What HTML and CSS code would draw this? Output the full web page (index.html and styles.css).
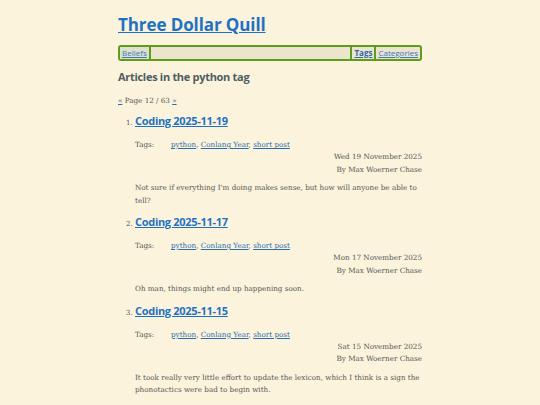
FILE: index.html
```html
<!DOCTYPE html>
<html lang="en">
<head>
<meta charset="utf-8">
<title>Three Dollar Quill</title>
<link rel="stylesheet" href="styles.css">
</head>
<body>
<div class="page">
  <header class="site-header">
    <h1 class="site-title"><a href="#">Three Dollar Quill</a></h1>
    <nav class="nav">
      <a class="nav-item first" href="#">Beliefs</a>
      <span class="nav-fill"></span>
      <a class="nav-item current" href="#">Tags</a>
      <a class="nav-item" href="#">Categories</a>
    </nav>
  </header>
  <main>
    <h2 class="section-title">Articles in the python tag</h2>
    <p class="pager"><a href="#">«</a> Page 12 / 63 <a href="#">»</a></p>
    <ol class="articles" start="1">
      <li class="article">
        <h3 class="article-title"><a href="#">Coding 2025-11-19</a></h3>
        <div class="tags"><span class="tags-label">Tags:</span><span><a href="#">python</a>, <a href="#">Conlang Year</a>, <a href="#">short post</a></span></div>
        <div class="meta">Wed 19 November 2025</div>
        <div class="meta">By Max Woerner Chase</div>
        <p class="summary">Not sure if everything I'm doing makes sense, but how will anyone be able to tell?</p>
      </li>
      <li class="article">
        <h3 class="article-title"><a href="#">Coding 2025-11-17</a></h3>
        <div class="tags"><span class="tags-label">Tags:</span><span><a href="#">python</a>, <a href="#">Conlang Year</a>, <a href="#">short post</a></span></div>
        <div class="meta">Mon 17 November 2025</div>
        <div class="meta">By Max Woerner Chase</div>
        <p class="summary">Oh man, things might end up happening soon.</p>
      </li>
      <li class="article">
        <h3 class="article-title"><a href="#">Coding 2025-11-15</a></h3>
        <div class="tags"><span class="tags-label">Tags:</span><span><a href="#">python</a>, <a href="#">Conlang Year</a>, <a href="#">short post</a></span></div>
        <div class="meta">Sat 15 November 2025</div>
        <div class="meta">By Max Woerner Chase</div>
        <p class="summary">It took really very little effort to update the lexicon, which I think is a sign the phonotactics were bad to begin with.</p>
      </li>
    </ol>
  </main>
</div>
</body>
</html>
```
FILE: styles.css
```css
html, body {
  margin: 0;
  padding: 0;
  background: #fcf3dc;
}
body {
  font-family: "DejaVu Serif", serif;
  font-size: 7.2px;
  color: #555;
}
.page {
  width: 304px;
  margin: 0 auto;
  padding-top: 14px;
}
a { color: #2a6cb0; }
.site-title {
  margin: 0;
  font-family: "Open Sans", sans-serif;
  font-size: 17px;
  font-weight: 700;
  line-height: 22px;
  letter-spacing: -0.1px;
}
.site-title a { color: #1e72c4; }
.nav {
  margin-top: 9px;
  display: flex;
  align-items: stretch;
  height: 12px;
  border: 2px solid #5e9c1c;
  border-radius: 3px;
  background: #ebe4cf;
  font-family: "Open Sans", sans-serif;
  font-size: 8px;
  line-height: 12px;
}
.nav-item {
  padding: 0 2px;
  color: #3a78b8;
}
.nav-item.first {
  background: #dde0cc;
  border-right: 2px solid #5e9c1c;
}
.nav-fill { flex: 1; border-right: 2px solid #5e9c1c; }
.nav-item.current {
  font-weight: 700;
  color: #2e6aa8;
  border-right: 2px solid #5e9c1c;
}
.section-title {
  margin: 8px 0 0;
  font-family: "Open Sans", sans-serif;
  font-size: 11px;
  font-weight: 700;
  color: #4f5d62;
  line-height: 16px;
  letter-spacing: -0.3px;
}
.pager {
  margin: 10px 0 0;
  line-height: 12px;
}
.articles {
  margin: 6px 0 0;
  padding-left: 17px;
}
.article { margin-bottom: 7px; }
.article::marker { font-size: 7px; color: #555; }
.article-title {
  margin: 0;
  font-family: "Open Sans", sans-serif;
  font-size: 11px;
  font-weight: 700;
  line-height: 16px;
  letter-spacing: -0.3px;
}
.article-title a { color: #1e72c4; }
.tags {
  margin-top: 10px;
  display: flex;
  line-height: 12px;
}
.tags-label { width: 36px; }
.meta {
  text-align: right;
  line-height: 12.5px;
}
.summary {
  margin: 6px 0 0;
  line-height: 12.5px;
}
```
